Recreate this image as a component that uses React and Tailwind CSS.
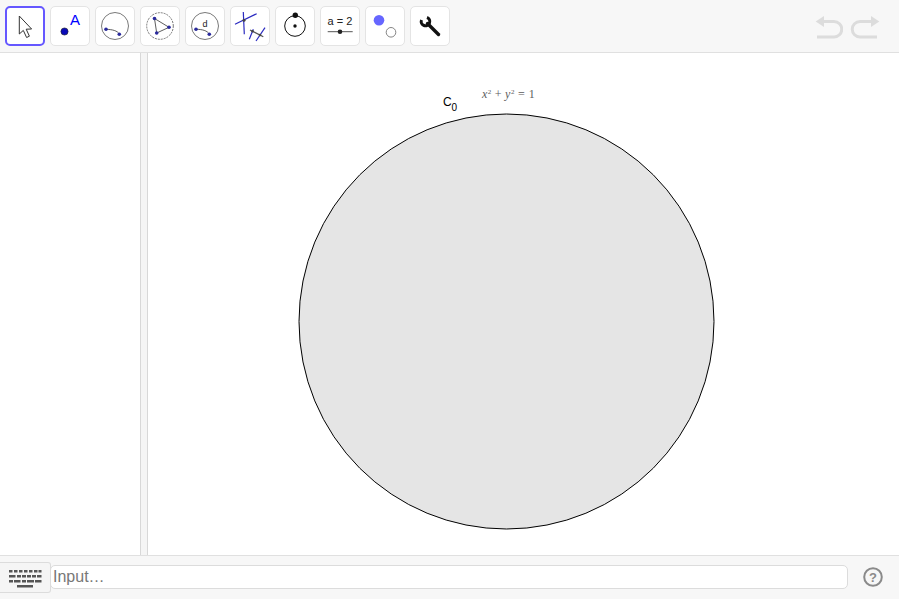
import React from 'react';

const ToolButton = ({ active, children }) => (
  <div className={`w-10 h-10 rounded-[5px] bg-white flex items-center justify-center ${active ? 'border-2 border-[#6557ff]' : 'border border-[#e4e4e4]'}`}>
    <svg width="32" height="32" viewBox="0 0 32 32" fill="none">{children}</svg>
  </div>
);

const Dot = ({ x, y, r = 1.8, fill = '#2a2a9c' }) => <circle cx={x} cy={y} r={r} fill={fill} />;

const tools = [
  <path key="a" d="M10.3 6 L10.3 24 L14.3 20.4 L17.6 27.5 L20.4 26.2 L17.2 19.2 L22.6 19 Z" stroke="#333" strokeWidth="1" fill="#fff" />,
  <g key="b">
    <circle cx="10.5" cy="21.5" r="3.6" fill="#0a0ab8" stroke="#222" strokeWidth="0.6" />
    <text x="16" y="15" fontSize="15" fill="#0000ff" fontFamily="Liberation Sans, sans-serif">A</text>
  </g>,
  <g key="c">
    <circle cx="16" cy="16" r="13.5" stroke="#555" strokeWidth="0.8" />
    <path d="M7 19.3 C13 19.5 18.5 20.5 20.5 24.3" stroke="#333" strokeWidth="0.8" />
    <Dot x={7} y={19.3} /><Dot x={20.3} y={24.3} />
  </g>,
  <g key="d">
    <circle cx="16" cy="16" r="13.3" stroke="#555" strokeWidth="0.8" strokeDasharray="2 1" />
    <path d="M10.5 8.5 L25 17.3 L12.7 23 Z" stroke="#333" strokeWidth="0.8" />
    <Dot x={10.5} y={8.5} /><Dot x={25} y={17.3} /><Dot x={12.7} y={23} />
  </g>,
  <g key="e">
    <circle cx="16" cy="16" r="13.5" stroke="#555" strokeWidth="0.8" />
    <path d="M7 19.3 C13 19.3 18.5 20.5 20.3 24.3" stroke="#333" strokeWidth="0.8" />
    <Dot x={7} y={19.3} /><Dot x={20.3} y={24.3} />
    <text x="13.5" y="17" fontSize="9" fill="#222" fontFamily="Liberation Sans, sans-serif">d</text>
  </g>,
  <g key="f" stroke="#2a2ac0" strokeWidth="1.2">
    <path d="M1 14.3 L22.7 3.7" />
    <path d="M9.3 2 L10.3 24.3" />
    <path d="M16 20 L29.3 26.7" stroke="#555" />
    <path d="M19.3 19.3 L15.3 29.3" />
    <path d="M31 17.7 L22 31" />
    <circle cx="10" cy="10.3" r="1.5" fill="#444" stroke="none" />
    <circle cx="18.6" cy="21.3" r="1.3" fill="#444" stroke="none" />
    <circle cx="26" cy="25" r="1.3" fill="#444" stroke="none" />
  </g>,
  <g key="g">
    <circle cx="16" cy="16" r="10.3" stroke="#111" strokeWidth="1" />
    <circle cx="16.3" cy="5.3" r="2.7" fill="#111" />
    <circle cx="16" cy="16" r="1.7" fill="#111" />
  </g>,
  <g key="h">
    <text x="16" y="15" textAnchor="middle" fontSize="11" fill="#222" fontFamily="Liberation Sans, sans-serif">a = 2</text>
    <path d="M3.7 21.7 L28.7 21.7" stroke="#555" strokeWidth="1" />
    <circle cx="16" cy="21.7" r="2.3" fill="#222" />
  </g>,
  <g key="i">
    <circle cx="10" cy="10.3" r="5.3" fill="#6666ff" />
    <circle cx="22" cy="22.3" r="4.8" fill="#fff" stroke="#777" strokeWidth="0.9" />
  </g>,
  <g key="j" stroke="#111">
    <path d="M13.5 13.5 L24.5 24.5" strokeWidth="3.4" strokeLinecap="round" />
    <path d="M13 7.5 A4.27 4.27 0 1 1 7.5 10" strokeWidth="3" />
  </g>,
];

const App = () => {
  return (
    <div className="w-[899px] h-[599px] bg-white flex flex-col font-['Liberation_Sans',sans-serif]">
      {/* toolbar */}
      <div className="h-[53px] shrink-0 bg-[#f7f7f7] border-b border-[#e0e0e0] pl-[5px] pr-[19px] pt-[6px] flex justify-between">
        <div className="flex gap-[5px]">
          {tools.map((icon, index) => (
            <ToolButton key={index} active={index === 0}>{icon}</ToolButton>
          ))}
        </div>
        <div className="flex gap-[7px] pt-[5px]">
          <svg width="30" height="28" viewBox="0 0 30 28" fill="none" stroke="#dcdcdc" strokeWidth="3">
            <path d="M8 10.5 H21 A7.75 7.75 0 0 1 21 26 H4" />
            <path d="M2.7 10.5 L11 5 V16 Z" fill="#dcdcdc" stroke="none" />
          </svg>
          <svg width="30" height="28" viewBox="0 0 30 28" fill="none" stroke="#dcdcdc" strokeWidth="3">
            <path d="M24 10.5 H10 A7.75 7.75 0 0 0 10 26 H27" />
            <path d="M29.3 10.5 L21 5 V16 Z" fill="#dcdcdc" stroke="none" />
          </svg>
        </div>
      </div>

      {/* main area */}
      <div className="flex-1 flex min-h-0">
        <div className="w-[140px] shrink-0 bg-white" />
        <div className="w-2 shrink-0 bg-[#f5f5f5] border-x border-[#d8d8d8]" />
        <div className="flex-1 min-w-0 bg-white">
          <svg width="751" height="502" viewBox="148 53 751 502" className="block">
            <circle cx="506.5" cy="321.5" r="207.5" fill="#e5e5e5" stroke="#000" strokeWidth="1" />
            <text x="443" y="105.5" fontSize="12" fill="#000" fontFamily="Liberation Sans, sans-serif">C</text>
            <text x="451.5" y="110.5" fontSize="10" fill="#000" fontFamily="Liberation Sans, sans-serif">0</text>
            <text x="482" y="98" fontSize="12" fill="#333" opacity="0.8" fontFamily="Liberation Serif, serif">
              <tspan fontStyle="italic">x</tspan>
              <tspan fontSize="7" dy="-4" dx="0.5">2</tspan>
              <tspan dy="4" dx="3.5">+</tspan>
              <tspan fontStyle="italic" dx="3.5">y</tspan>
              <tspan fontSize="7" dy="-4" dx="0.5">2</tspan>
              <tspan dy="4" dx="3.5">=</tspan>
              <tspan dx="4">1</tspan>
            </text>
          </svg>
        </div>
      </div>

      {/* input bar */}
      <div className="h-11 shrink-0 bg-[#f7f7f7] border-t border-[#e0e0e0] relative flex items-center pl-[50px] pr-[51px] pb-[2px]">
        <div className="absolute left-0 top-[6px] w-[51px] h-[31px] bg-[#f5f5f5] border border-[#dcdcdc] border-l-0 rounded-r-[3px] flex items-center justify-center">
          <svg width="34" height="20" viewBox="0 0 34 20" fill="#555">
            <path d="M1 2h3.5v2.5H1zM6 2h3.5v2.5H6zM11 2h3.5v2.5H11zM16 2h3.5v2.5H16zM21 2h3.5v2.5H21zM26 2h3.5v2.5H26zM30.5 2h3v2.5h-3z" />
            <path d="M1 7h6.5v2.5H1zM9 7h4v2.5H9zM14 7h4v2.5h-4zM19 7h4v2.5h-4zM24 7h4v2.5h-4zM29 7h4.5v2.5H29z" />
            <path d="M1 12h4v2.5H1zM6 12h6.5v2.5H6zM14 12h4v2.5h-4zM19 12h7v2.5h-7zM27 12h6.5v2.5H27z" />
            <path d="M9 17h16v2.5H9z" />
          </svg>
        </div>
        <div className="flex-1 h-6 bg-white border border-[#dcdcdc] rounded-[5px] pl-[2px] flex items-center text-base text-[#777]">
          Input…
        </div>
        <svg width="22" height="22" viewBox="0 0 22 22" className="absolute right-[15px] top-[10px]" fill="none">
          <circle cx="11" cy="11" r="8.8" stroke="#8a8a8a" strokeWidth="2" />
          <text x="11" y="15.5" textAnchor="middle" fontSize="13" fontWeight="700" fill="#8a8a8a" fontFamily="Liberation Sans, sans-serif">?</text>
        </svg>
      </div>
    </div>
  );
};

export default App;
